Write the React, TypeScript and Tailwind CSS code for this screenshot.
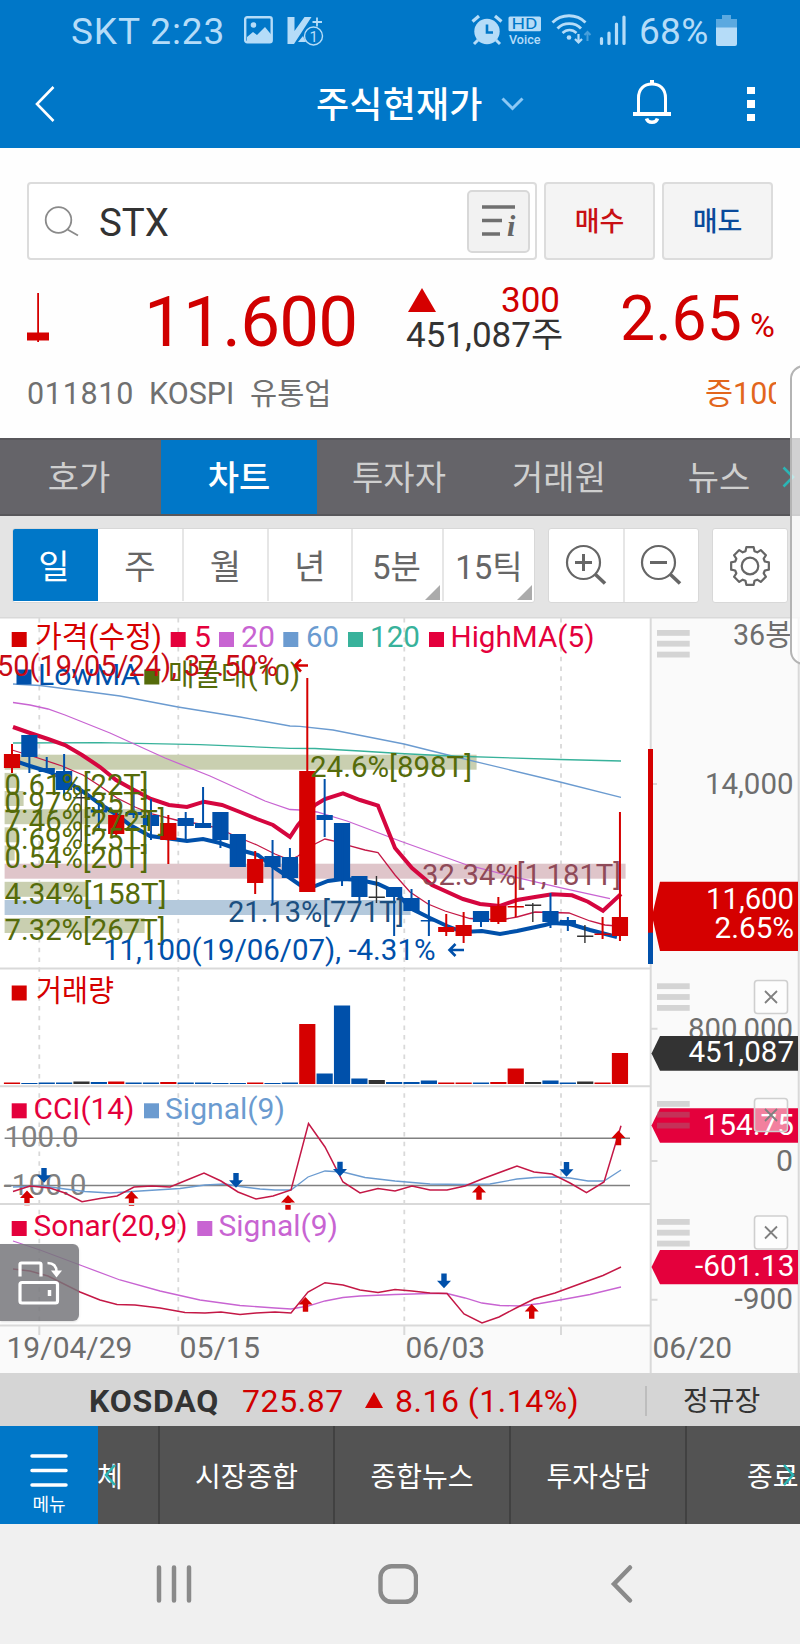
import React from 'react';

const RED = '#d50000';
const BLUE = '#0050aa';
const BLACK = '#333333';
const CRIMSON = '#e4003c';
const PURPLE = '#c864d2';
const SKY = '#6b9bd0';
const TEAL = '#38b29b';
const OLIVE = '#556b0a';
const GRAY = '#6e6e6e';

// [color, bodyTop, bodyBottom, wickTop, wickBottom, volumeHeight]
type Candle = [string, number, number, number, number, number];

const candles: Candle[] = [
    [RED, 754, 768, 744, 773, 1.5],
    [BLUE, 735, 757, 735, 773, 1],
    [BLUE, 768, 772, 757, 773, 1.5],
    [BLUE, 771, 790, 754, 796, 1.5],
    [BLACK, 797, 798.5, 790, 842, 2.5],
    [BLUE, 809.5, 812.5, 802, 831, 2],
    [RED, 815, 834, 810, 837, 2.5],
    [BLUE, 812, 815, 793, 818, 1.5],
    [BLUE, 815, 826, 799, 840, 1.5],
    [RED, 823, 840, 815, 864, 2],
    [BLUE, 818, 826, 812, 840, 1.5],
    [BLUE, 823, 828, 787, 828, 1.5],
    [BLUE, 812, 840, 812, 848, 1],
    [BLUE, 834, 867, 834, 867, 1],
    [RED, 859, 883, 851, 894, 1.5],
    [BLUE, 856, 867, 840, 904, 1],
    [BLUE, 857, 878, 848, 878, 1.5],
    [RED, 771, 892, 678, 892, 60],
    [BLUE, 815, 820, 779, 837, 10.5],
    [BLUE, 823, 881, 823, 886, 78.5],
    [BLUE, 876, 897, 876, 903, 5.5],
    [BLACK, 896.5, 898, 876, 903, 4],
    [BLUE, 887, 897, 887, 936, 2],
    [BLUE, 898, 911, 889, 911, 2],
    [BLUE, 920, 921.5, 900, 936, 3.5],
    [RED, 927, 932, 914, 936, 1.5],
    [RED, 925, 936, 912, 943, 1.5],
    [BLUE, 911, 922, 911, 927, 1.5],
    [RED, 906, 922, 897, 924, 2],
    [RED, 906, 907.5, 865, 917, 15.5],
    [BLACK, 904.5, 906, 903, 922, 2],
    [BLUE, 911, 922, 893, 928, 3.5],
    [BLUE, 920, 924.5, 917, 931, 1.5],
    [BLACK, 935.5, 937, 925, 943, 2.5],
    [RED, 933.5, 935, 917, 939, 1.5],
    [RED, 917, 936, 812, 941, 31],
];

const centerX = (i: number) => 12 + i * 17.37;

const priceLines = [
    { color: SKY, width: 1.3, points: '13,684 40,685.5 75,690 120,696 178,707 240,717 290,726 300,726.3 333,730 404,744 450,755.5 560,782 621,797.3' },
    { color: TEAL, width: 1.3, points: '13,743 100,742.7 200,744.7 290,748.3 315,748.5 360,751 400,753.5 450,756 560,759.5 621,761' },
    { color: PURPLE, width: 1.3, points: '13,702.5 30,705 48,709 65,715 110,733 165,758 210,776 265,801 290,809.5 300,810 317,812 347,821 400,841 467,865 513,876.7 560,887.7 610,898.7' },
    { color: '#c41846', width: 1.3, points: '12,750 35,757 62,766 83,775 100,786 117,798 135,807 152,814 180,821 200,824 218,828 235,836 257,845 275,854 290,860 298,856 315,844 325,839 343,843 350,846 365,850 378,852.7 395,875 410,892 428,904 445,911 470,918.5 500,920 517,917 535,912 552,912.5 569,913 590,921 605,925 617,926' },
    { color: '#0050aa', width: 4, points: '12,760 30,766 50,772 65,780 85,793 100,804 117,815 130,825 150,836 165,838 187,841 203,839 220,843 240,850 258,855 275,868 290,878 300,885 315,886 328,881 343,879 360,880 378,884 395,892 412,909 430,918 447,926 463,932 482,931 500,934 517,931 545,925 552,923 570,924 590,930 617,937' },
    { color: '#d5063f', width: 4, points: '13,727 30,733 48,739 65,745 82,755 100,767 116,780 134,790 151,799 169,805 187,807 204,801.7 222,805 240,812 257,819 273,825 290,837 298,825 315,805 325,799 343,793.3 360,800 378,805.7 395,848 412,868 432,885 463,899 480,904 500,906 517,900 535,897 552,894.3 572,895.3 588,901.7 603,910.7 621,894' },
];

const profile = [
    { y: 754.7, w: 472, fill: '#c9cfb0' },
    { y: 772.9, w: 12, fill: '#c9cfb0' },
    { y: 791, w: 19, fill: '#c9cfb0' },
    { y: 809.2, w: 143, fill: '#c9cfb0' },
    { y: 827.3, w: 13, fill: '#c9cfb0' },
    { y: 845.5, w: 10, fill: '#c9cfb0' },
    { y: 863.7, w: 621, fill: '#dfc5ca' },
    { y: 881.8, w: 83, fill: '#c9cfb0' },
    { y: 900, w: 406, fill: '#b4c9dc' },
    { y: 918, w: 140, fill: '#c9cfb0' },
];

const profileLabels = [
    { x: 310, y: 776.5, w: 162, text: '24.6%[898T]', fill: OLIVE },
    { x: 4.5, y: 794.5, w: 144, text: '0.61%[22T]', fill: OLIVE },
    { x: 4.5, y: 812.5, w: 144, text: '0.97%[35T]', fill: OLIVE },
    { x: 4.5, y: 830.5, w: 161, text: '7.46%[272T]', fill: OLIVE },
    { x: 4.5, y: 849, w: 144, text: '0.69%[25T]', fill: OLIVE },
    { x: 4.5, y: 867.5, w: 144, text: '0.54%[20T]', fill: OLIVE },
    { x: 422, y: 885.2, w: 199, text: '32.34%[1,181T]', fill: '#8f4a58' },
    { x: 4.5, y: 903.7, w: 162, text: '4.34%[158T]', fill: OLIVE },
    { x: 228, y: 921.7, w: 176, text: '21.13%[771T]', fill: '#1b4f80' },
    { x: 4.5, y: 940, w: 161, text: '7.32%[267T]', fill: OLIVE },
];

const legends = [
    { x: 11.7, y: 632, color: RED, tx: 35, w: 127, text: '가격(수정)' },
    { x: 170.7, y: 632, color: CRIMSON, tx: 194, w: 17, text: '5' },
    { x: 219, y: 632, color: PURPLE, tx: 241, w: 34, text: '20' },
    { x: 283.3, y: 632, color: SKY, tx: 306, w: 33, text: '60' },
    { x: 348, y: 632, color: TEAL, tx: 370, w: 50, text: '120' },
    { x: 429, y: 632, color: CRIMSON, tx: 450.5, w: 144, text: 'HighMA(5)' },
    { x: 16.5, y: 669.5, color: BLUE, tx: 38, w: 102, text: 'LowMA' },
    { x: 144.3, y: 669.5, color: OLIVE, tx: 168, w: 132, text: '매물대(10)' },
    { x: 11.7, y: 985.5, color: RED, tx: 36, w: 78, text: '거래량' },
    { x: 11.7, y: 1103.3, color: CRIMSON, tx: 33.5, w: 101, text: 'CCI(14)' },
    { x: 144, y: 1103.3, color: SKY, tx: 165, w: 120, text: 'Signal(9)' },
    { x: 11.7, y: 1221, color: CRIMSON, tx: 33.5, w: 154, text: 'Sonar(20,9)' },
    { x: 197.3, y: 1221, color: PURPLE, tx: 218.5, w: 119.5, text: 'Signal(9)' },
];

const gridX = [39.3, 178.3, 404.3, 561];

interface LabelProps {
    x: number;
    y: number;
    w: number;
    fill: string;
    size?: number;
    children: React.ReactNode;
}

function Label({ x, y, w, fill, size = 29.5, children }: LabelProps) {
    return (
        <text x={x} y={y} fill={fill} fontSize={size} textLength={w} lengthAdjust="spacingAndGlyphs">
            {children}
        </text>
    );
}

function Arrow({ x, y, up }: { x: number; y: number; up?: boolean }) {
    return up ? (
        <path d={`M${x} ${y}l7 7.5h-4.3v7.2h-5.4v-7.2h-4.3z`} fill={RED} />
    ) : (
        <path d={`M${x} ${y + 14.7}l-7 -7.5h4.3v-7.2h5.4v7.2h4.3z`} fill={BLUE} />
    );
}

function Handle({ y }: { y: number }) {
    return (
        <g fill="#8c8c8c" fillOpacity="0.35">
            <rect x="657" y={y} width="32.7" height="5.8" />
            <rect x="657" y={y + 10.8} width="32.7" height="5.8" />
            <rect x="657" y={y + 21.7} width="32.7" height="5.8" />
        </g>
    );
}

function CloseBox({ y }: { y: number }) {
    return (
        <g>
            <rect x="754.5" y={y} width="33" height="33" rx="3" fill="#ffffff" fillOpacity="0.5" stroke="#cfcfcf" strokeWidth="1.6" />
            <path d={`M765 ${y + 10.5}l12 12m0 -12l-12 12`} stroke="#808080" strokeWidth="1.8" fill="none" />
        </g>
    );
}

function Chart() {
    return (
        <svg viewBox="0 617 800 756" className="block h-[756px] w-full bg-white">
            {/* axis backgrounds */}
            <rect x="651" y="617" width="149" height="756" fill="#fafafa" />
            <rect x="0" y="1326" width="800" height="47" fill="#fafafa" />
            <g stroke="#d9d9d9" strokeWidth="2" fill="none">
                {gridX.map((x) => (
                    <path key={x} d={`M${x} 618V1324`} strokeWidth="1.8" strokeDasharray="4.5 5.2" />
                ))}
                <path d="M0 617.5H800" />
                <path d="M0 968.5H650M0 1086.3H650M0 1204H650M0 1325.5H650" />
                <path d="M39.3 1325V1335M178.3 1325V1335M404.3 1325V1335M561 1325V1335" />
                <path d="M650.7 617V1373M798.7 617V1373" />
                <path d="M651 784H657M651 1028.7H657.5M651 1161H657.5M651 1299.7H657.5" />
            </g>

            {profile.map((p) => (
                <rect key={p.y} x="4.6" y={p.y} width={p.w} height="15" fill={p.fill} />
            ))}

            {priceLines.map((l, i) => (
                <polyline key={i} points={l.points} fill="none" stroke={l.color} strokeWidth={l.width} />
            ))}

            {candles.map(([color, top, bottom, wickTop, wickBottom, volume], i) => (
                <g key={i} fill={color}>
                    <rect x={centerX(i) - 8.1} y={top} width="16.2" height={bottom - top} />
                    <rect x={centerX(i) - 1} y={wickTop} width={color === BLACK ? 1.4 : 2} height={wickBottom - wickTop} />
                    <rect x={centerX(i) - 8.1} y={1084 - volume} width="16.2" height={volume} />
                </g>
            ))}

            {profileLabels.map((l) => (
                <Label key={l.text} x={l.x} y={l.y} w={l.w} fill={l.fill}>{l.text}</Label>
            ))}

            {/* low marker */}
            <Label x={103} y={960.2} w={332.5} fill={BLUE}>11,100(19/06/07), -4.31%</Label>
            <path d="M464 950H450M455.5 944L449.5 950L455.5 956" stroke={BLUE} strokeWidth="2.6" fill="none" />

            {/* CCI */}
            <path d="M4.6 1138.2H630M4.6 1185.5H630" stroke="#808080" strokeWidth="1.4" />
            <Label x={4.5} y={1147.3} w={74} fill="#808080">100.0</Label>
            <Label x={3.5} y={1194.5} w={83} fill="#808080">-100.0</Label>
            <polyline
                points="13,1187 43,1186 65,1189 85,1191.5 110,1193 140,1191 180,1188.5 205,1185 225,1184 240,1186.5 260,1189 275,1190 291,1190 308,1177 325,1171 343,1172 365,1177.5 395,1181 430,1184 465,1184.5 490,1184 517,1179 535,1177.5 555,1177 570,1178 588,1181 604,1181 621,1170"
                fill="none" stroke={SKY} strokeWidth="1.3"
            />
            <polyline
                points="13,1191.5 30,1186 50,1188 65,1193 82,1201.7 100,1198.5 117,1196 134,1187 152,1186 170,1187 187,1180 204,1173 221,1181 238,1192 256,1199 273,1196 291,1190 308.5,1123.5 325,1147 343,1182 360,1193 378,1188.5 395,1191 412,1186 430,1190 447,1190 465,1186 482,1179 517,1166 534,1172 552,1174 570,1183 586.5,1192.7 604,1182 621,1125.7"
                fill="none" stroke="#c41846" strokeWidth="1.5"
            />
            <Arrow x={44} y={1168} />
            <Arrow x={236} y={1173} />
            <Arrow x={340} y={1161.7} />
            <Arrow x={566.5} y={1162} />
            <Arrow x={27} y={1190.5} up />
            <Arrow x={131.5} y={1191} up />
            <Arrow x={288} y={1195} up />
            <Arrow x={479} y={1185} up />
            <Arrow x={618.5} y={1130.5} up />
            <path d="M0 1204H300" stroke="#d9d9d9" strokeWidth="2" />

            {/* Sonar */}
            <polyline
                points="13,1241 40,1250 80,1265 120,1280 160,1291 200,1300 240,1305.5 275,1308 291,1309 308,1306 325,1301 343,1297.5 360,1296 395,1294.5 430,1293.5 447,1293.5 465,1298 482,1303 500,1305.5 520,1306 540,1303.5 560,1300 590,1294.5 621,1287"
                fill="none" stroke={PURPLE} strokeWidth="1.3"
            />
            <polyline
                points="13,1269 30,1271 48,1276 80,1292 100,1300 117,1304.5 135,1305 160,1308 185,1312.5 205,1313 221,1312 240,1314.5 256,1313 275,1312 291,1313 308,1292 325,1282.7 343,1285 360,1290 378,1292.5 395,1289.5 412,1291 430,1293 447,1293.5 464,1314 482,1323 499,1317 517,1307.5 534,1299 555,1293 585,1282 603,1275.5 621,1267"
                fill="none" stroke="#c41846" strokeWidth="1.5"
            />
            <Arrow x={305.5} y={1297} up />
            <Arrow x={444} y={1273.5} />
            <Arrow x={531.7} y={1304} up />

            {legends.map((l, i) => (
                <g key={i}>
                    <rect x={l.x} y={l.y} width="15" height="15" fill={l.color} />
                    <Label x={l.tx} y={l.y + 15.3} w={l.w} fill={l.color}>{l.text}</Label>
                </g>
            ))}

            {/* high marker */}
            <Label x={-3} y={675.7} w={281} fill="#c80a14">50(19/05/24), 37.50%</Label>
            <path d="M308 665.5H295M301 659.5L295 665.5L301 671.5" stroke={RED} strokeWidth="2.6" fill="none" />

            {/* right axis */}
            <rect x="648" y="749" width="5" height="184" fill={RED} />
            <rect x="648" y="932.7" width="5" height="31.3" fill={BLUE} />
            <Handle y={630} />
            <Label x={733} y={645.3} w={58.5} fill={GRAY}>36봉</Label>
            <Label x={705} y={794.3} w={88.5} fill={GRAY}>14,000</Label>
            <path d="M652 916L660 881.7H798V951H660z" fill={RED} />
            <Label x={706} y={909.3} w={88} fill="#ffffff">11,600</Label>
            <Label x={714.5} y={938.3} w={79.5} fill="#ffffff">2.65%</Label>

            <Label x={688} y={1039} w={105} fill={GRAY}>800,000</Label>
            <path d="M651.5 1053.5L660 1036H798V1070.7H660z" fill={BLACK} />
            <Label x={688.5} y={1062.2} w={105.5} fill="#ffffff">451,087</Label>
            <path d="M651.5 1125.5L660 1108.3H798V1142.7H660z" fill={CRIMSON} />
            <Label x={702.5} y={1135} w={91.5} fill="#ffffff">154.75</Label>
            <Label x={776} y={1171} w={17} fill={GRAY}>0</Label>
            <path d="M651.5 1267L660 1250H798V1284.3H660z" fill={CRIMSON} />
            <Label x={695} y={1276.3} w={99.5} fill="#ffffff">-601.13</Label>
            <Label x={734.5} y={1309.3} w={58.5} fill={GRAY}>-900</Label>
            <Handle y={983.3} />
            <Handle y={1101} />
            <Handle y={1219} />
            <CloseBox y={980.5} />
            <CloseBox y={1098.5} />
            <CloseBox y={1216} />

            <Label x={6.5} y={1357.5} w={126} fill={GRAY}>19/04/29</Label>
            <Label x={179.5} y={1357.5} w={80.5} fill={GRAY}>05/15</Label>
            <Label x={405.5} y={1357.5} w={79.5} fill={GRAY}>06/03</Label>
            <Label x={652.5} y={1357.5} w={79.5} fill={GRAY}>06/20</Label>
        </svg>
    );
}

function StatusBar() {
    return (
        <div className="flex h-[60px] items-center pl-[71px] text-[37px] leading-none text-[#b5dcf8]">
            <span className="w-[154px] pt-[2px] tracking-[0.9px] whitespace-nowrap">SKT 2:23</span>
            <svg viewBox="0 0 80 32" className="ml-[19px] h-8 w-20 shrink-0" fill="none">
                <rect x="1.2" y="3.2" width="26.5" height="25" rx="2" stroke="currentColor" strokeWidth="2.4" />
                <circle cx="9.5" cy="11" r="2.8" fill="currentColor" />
                <path d="M3 23l6-5 4 3 8-8 6.5 8v7H3z" fill="currentColor" />
                <path d="M43.5 3h7v14l10-14h7L50 30h-6.5z" fill="currentColor" />
                <path d="M54 28l5-6 3 6z" fill="currentColor" />
                <path d="M73 3.500v9M68.500 8h9.500" stroke="currentColor" strokeWidth="1.8" />
                <circle cx="69.5" cy="22" r="9" fill="#0077c8" stroke="currentColor" strokeWidth="1.4" />
                <text x="65.5" y="27.5" fontSize="15" fill="currentColor">1</text>
            </svg>
            <svg viewBox="0 0 160 32" className="ml-[147px] h-8 w-40 shrink-0" fill="none" stroke="currentColor">
                <circle cx="16" cy="17.5" r="12.7" fill="currentColor" stroke="none" />
                <path d="M16 10.5v8h6" stroke="#0077c8" strokeWidth="2.6" />
                <path d="M1.5 7.500L8 2M30.500 7.500L24 2" strokeWidth="3.2" />
                <path d="M7 26l-4 4M25 26l4 4" strokeWidth="3" />
                <rect x="37.5" y="2.5" width="32.5" height="14.8" rx="1.5" fill="currentColor" stroke="none" />
                <text x="40.5" y="14.8" fontSize="14.5" textLength="26" lengthAdjust="spacingAndGlyphs" fill="#0077c8" stroke="none">HD</text>
                <text x="38" y="29.5" fontSize="12.5" fontWeight="500" textLength="31.5" lengthAdjust="spacingAndGlyphs" fill="currentColor" stroke="none">Voice</text>
                <path d="M81.5 8.500c9-9 24-9 33 0" strokeWidth="2.8" />
                <path d="M86.5 14.500c6-6.500 17.500-6.500 23.500 0" strokeWidth="2.8" />
                <path d="M91.5 19c4-4 10-4 14 0" strokeWidth="2.6" />
                <circle cx="98" cy="23.5" r="2.3" fill="currentColor" stroke="none" />
                <path d="M107.5 20v8M104 25l3.500 3.500L111 25" strokeWidth="2.2" />
                <path d="M116.500 27v-9M113.500 21l3-3 3 3" strokeWidth="2" opacity="0.4" />
                <path d="M130.500 24.500v5M138 19v10.500M145.500 10v19.500M153 3v26.500" strokeWidth="3.2" strokeLinecap="round" />
            </svg>
            <span className="ml-[8px] w-[72px] pt-[2px] tracking-[0.3px]">68%</span>
            <svg viewBox="0 0 21 31" className="ml-[5px] h-[31px] w-[21px] shrink-0" fill="currentColor">
                <path d="M6 0h9v4h6v9H0V4h6z" opacity="0.5" />
                <path d="M0 12.500h21V29a2 2 0 0 1-2 2H2a2 2 0 0 1-2-2z" />
            </svg>
        </div>
    );
}

function Header() {
    return (
        <div className="h-[148px] bg-[#0077c8] text-white">
            <StatusBar />
            <div className="flex h-[88px] items-center">
                <svg viewBox="0 0 20 36" className="ml-[35px] h-9 w-5 shrink-0" fill="none" stroke="currentColor" strokeWidth="2.6">
                    <path d="M18.500 1L2 18l16.500 17" />
                </svg>
                <h1 className="ml-[261px] w-[170px] pt-[4px] text-[36px] leading-[44px] font-medium tracking-[0.2px] whitespace-nowrap">주식현재가</h1>
                <svg viewBox="0 0 23 14" className="ml-[15px] h-3.5 w-[23px] shrink-0" fill="none" stroke="#8cc8f5" strokeWidth="3">
                    <path d="M1.500 1.500l10 10 10-10" />
                </svg>
                <svg viewBox="0 0 40 46" className="mt-[-4px] ml-[108px] h-[46px] w-10 shrink-0" fill="none" stroke="currentColor" strokeWidth="3">
                    <path d="M20 1v4" strokeWidth="4" />
                    <path d="M6.500 34V19C6.500 10 12 5 20 5s13.500 5 13.500 14v15" />
                    <path d="M1 35h38" strokeWidth="4" />
                    <path d="M14.500 39.500c1.500 5 9.500 5 11 0" strokeWidth="3.5" />
                </svg>
                <div className="ml-[75px] flex flex-col gap-[6px]">
                    <span className="size-[7.5px] bg-white" />
                    <span className="size-[7.5px] bg-white" />
                    <span className="size-[7.5px] bg-white" />
                </div>
            </div>
        </div>
    );
}

function SearchRow() {
    return (
        <div className="flex h-[78px] items-stretch gap-[7px] pl-[27px]">
            <div className="flex w-[510px] items-center rounded-[4px] border-2 border-[#dcdcdc] bg-white">
                <svg viewBox="0 0 36 32" className="ml-[15px] h-8 w-9 shrink-0" fill="none" stroke="#8a8a8a" strokeWidth="1.8">
                    <circle cx="14.5" cy="15" r="12.8" />
                    <path d="M23.500 24.500l10.500 6" />
                </svg>
                <span className="ml-[19px] w-[368px] pt-[4px] text-[38.5px] leading-none text-[#333333]">STX</span>
                <div className="flex h-[63px] w-[63px] shrink-0 items-center justify-center rounded-[5px] border-2 border-[#d8d8d8] bg-[#f2f2f2]">
                    <svg viewBox="0 0 36 34" className="h-[34px] w-9" fill="none" stroke="#707070" strokeWidth="3.5">
                        <path d="M1 3h33M1 16.500h20M1 30h18" />
                        <text x="26" y="32" fontSize="30" fontWeight="bold" fontStyle="italic" fontFamily="Liberation Serif" fill="#666666" stroke="none">i</text>
                    </svg>
                </div>
            </div>
            <button className="w-[111px] rounded-[4px] border-2 border-[#dcdcdc] bg-[#f4f4f4] pt-[3px] text-[27px] font-medium text-[#c80f14]">매수</button>
            <button className="w-[111px] rounded-[4px] border-2 border-[#dcdcdc] bg-[#f4f4f4] pt-[3px] text-[27px] font-medium text-[#0a4a9b]">매도</button>
        </div>
    );
}

function PriceInfo() {
    return (
        <div>
            <div className="mt-[22px] flex h-[78px]">
                <svg viewBox="0 0 22 50" className="mt-[11px] ml-[27px] h-[50px] w-[22px] shrink-0" fill={RED}>
                    <rect x="10.2" y="0" width="1.8" height="49" />
                    <rect x="0" y="39.5" width="22" height="8" />
                </svg>
                <div className="ml-[95px] w-[222px] text-[71px] leading-[79px] tracking-[-0.8px] text-[#d00000]">11.600</div>
                <div className="ml-[39px] w-[165px]">
                    <div className="flex h-[36px] items-center justify-between pr-[10px] text-[35px] leading-[36px] text-[#d00000]">
                        <svg viewBox="0 0 28 24" className="ml-[3px] h-6 w-7" fill={RED}>
                            <path d="M14 0l14 24H0z" />
                        </svg>
                        <span className="pt-[2px]">300</span>
                    </div>
                    <div className="mt-[1px] ml-[1px] h-[36px] text-[35px] leading-[34px] whitespace-nowrap text-[#333333]">451,087주</div>
                </div>
                <div className="ml-[50px] w-[123px] text-[62.5px] leading-[73px] text-[#d00000]">2.65</div>
                <div className="mt-[23px] ml-[7px] text-[34px] leading-[40px] text-[#d00000]">%</div>
            </div>
            <div className="mt-[14px] flex h-[40px] items-center text-[30.5px] leading-[40px] whitespace-nowrap text-[#707070]">
                <span className="ml-[27px] w-[122px] tracking-[0.7px]">011810</span>
                <span className="w-[101px]">KOSPI</span>
                <span className="w-[455px] text-[29.5px]">유통업</span>
                <span className="w-[71px] overflow-hidden text-[#e2661c]">증100</span>
            </div>
        </div>
    );
}

function Tabs() {
    const tabs = ['호가', '차트', '투자자', '거래원', '뉴스'];
    return (
        <div className="flex h-[78px] border-y-2 border-[#58575b] bg-[#656469] text-[34px] leading-[76px] text-[#cfcfcf]">
            {tabs.map((tab) => (
                <div
                    key={tab}
                    className={
                        tab === '차트'
                            ? 'mr-[2px] ml-[3px] h-[74px] w-[156px] bg-[#0077c8] text-center font-medium text-white'
                            : tab === '호가'
                              ? 'w-[158px] text-center'
                              : 'w-[160px] text-center'
                    }
                >
                    {tab}
                </div>
            ))}
            <svg viewBox="0 0 14 22" className="mt-[26px] ml-[-17px] h-[22px] w-3.5 shrink-0" fill="none" stroke="#2bb5b5" strokeWidth="2.6">
                <path d="M1.500 1.500l9.500 9.500-9.500 9.500" />
            </svg>
        </div>
    );
}

const gearPath = () => {
    const parts: string[] = [];
    for (let i = 0; i < 8; i++) {
        const steps = [[-17, 15.5], [-11, 19.2], [11, 19.2], [17, 15.5]];
        steps.forEach(([deg, r]) => {
            const a = ((i * 45 + deg - 90) * Math.PI) / 180;
            parts.push(`${(21 + r * Math.cos(a)).toFixed(2)} ${(21 + r * Math.sin(a)).toFixed(2)}`);
        });
    }
    return `M${parts.join('L')}Z`;
};

function ZoomIcon({ plus }: { plus?: boolean }) {
    return (
        <svg viewBox="0 0 42 42" className="size-[42px]" fill="none" stroke="#666666" strokeWidth="2.2">
            <circle cx="18.5" cy="18.5" r="16.5" />
            <path d={plus ? 'M10 18.5h17M18.5 10v17' : 'M10 18.5h17'} strokeWidth="3" />
            <path d="M30.500 30.500l9.500 9" strokeWidth="3.6" />
        </svg>
    );
}

function Toolbar() {
    const cell = 'relative flex items-center justify-center border-r-2 border-[#e6e6e6]';
    return (
        <div className="flex h-[101px] bg-[#e4e4e4] pt-[12px] pl-[12px] text-[34px] leading-none text-[#666666]">
            <div className="flex h-[75px] w-[523px] overflow-hidden rounded-[3px] border border-[#d8d8d8] bg-white pb-[1px]">
                <div className="flex w-[85px] items-center justify-center bg-[#0077c8] pt-[4px] pr-[3px] text-white">일</div>
                <div className={`${cell} w-[86px] pt-[4px]`}>주</div>
                <div className={`${cell} w-[85px] pt-[4px]`}>월</div>
                <div className={`${cell} w-[84px] pt-[4px]`}>년</div>
                <div className={`${cell} w-[91px] pt-[4px] pr-[2px] text-[33px]`}>
                    5분
                    <svg viewBox="0 0 15 15" className="absolute right-[2px] bottom-[1px] size-[15px]" fill="#ababab"><path d="M15 0v15H0z" /></svg>
                </div>
                <div className="relative flex w-[90px] items-center justify-center pt-[4px] text-[33px]">
                    15틱
                    <svg viewBox="0 0 15 15" className="absolute right-[2px] bottom-[1px] size-[15px]" fill="#ababab"><path d="M15 0v15H0z" /></svg>
                </div>
            </div>
            <div className="ml-[13px] flex h-[75px] w-[151px] rounded-[3px] border border-[#d8d8d8] bg-white">
                <div className={`${cell} w-[76px] pb-[2px]`}><ZoomIcon plus /></div>
                <div className="flex w-[74px] items-center justify-center pb-[2px]"><ZoomIcon /></div>
            </div>
            <div className="ml-[13px] flex h-[75px] w-[76px] items-center justify-center rounded-[3px] border border-[#d8d8d8] bg-white">
                <svg viewBox="0 0 42 42" className="size-[42px]" fill="none" stroke="#666666" strokeWidth="2.2" strokeLinejoin="round">
                    <path d={gearPath()} />
                    <circle cx="21" cy="21" r="8.3" />
                </svg>
            </div>
        </div>
    );
}

function IndexBar() {
    return (
        <div className="flex h-[53px] items-center bg-[#d5d5d5] pt-[2px] text-[32px] leading-none whitespace-nowrap text-[#d00000]">
            <span className="ml-[89px] w-[153px] font-bold tracking-[0.8px] text-[#333333]">KOSDAQ</span>
            <span className="w-[123px] tracking-[0.6px]">725.87</span>
            <svg viewBox="0 0 18 16" className="mb-[2px] h-4 w-[18px]" fill={RED}><path d="M9 0l9 16H0z" /></svg>
            <span className="ml-[12px] w-[250px] tracking-[0.5px]">8.16 (1.14%)</span>
            <span className="h-[30px] w-[2px] bg-[#bdbdbd]" />
            <span className="ml-[36px] pt-[3px] text-[28px] text-[#333333]">정규장</span>
        </div>
    );
}

function BottomMenu() {
    return (
        <div className="flex h-[98px] overflow-hidden bg-[#535353] text-[28px] leading-[103px] whitespace-nowrap text-white">
            <div className="flex w-[98px] shrink-0 flex-col items-center bg-[#0077c8] pt-[28px]">
                <svg viewBox="0 0 38 34" className="h-[34px] w-[38px]" stroke="white" strokeWidth="3.5" strokeLinecap="round">
                    <path d="M2 2h34M2 16.500h34M2 31h34" />
                </svg>
                <span className="mt-[5px] text-[18px] leading-[24px]">메뉴</span>
            </div>
            <div className="relative flex w-[62px] shrink-0 justify-start overflow-hidden border-r-2 border-[#414141]">
                <span className="ml-[-1px]">체</span>
                <svg viewBox="0 0 12 22" className="absolute top-[38px] left-[6px] h-[22px] w-3" fill="none" stroke="#2bb5b5" strokeWidth="2.5"><path d="M11 1L2 11l9 10" /></svg>
            </div>
            <div className="w-[175px] shrink-0 border-r-2 border-[#414141] text-center">시장종합</div>
            <div className="w-[176px] shrink-0 border-r-2 border-[#414141] text-center">종합뉴스</div>
            <div className="w-[176px] shrink-0 border-r-2 border-[#414141] text-center">투자상담</div>
            <div className="relative w-[113px] shrink-0 pl-[60px]">
                종료
                <svg viewBox="0 0 12 22" className="absolute top-[38px] right-[5px] h-[22px] w-3" fill="none" stroke="#2bb5b5" strokeWidth="2.5"><path d="M1 1l9 10-9 10" /></svg>
            </div>
        </div>
    );
}

function SystemNav() {
    return (
        <div className="flex h-[120px] bg-[#f0f0f0] pt-[40px]">
            <svg viewBox="0 0 36 40" className="ml-[156px] h-10 w-9" stroke="#8a8a8a" strokeWidth="4.5" strokeLinecap="round">
                <path d="M3 3.500v33M18 3.500v33M33 3.500v33" />
            </svg>
            <svg viewBox="0 0 40 40" className="ml-[186px] size-10" fill="none" stroke="#8a8a8a" strokeWidth="4.4">
                <rect x="2.5" y="2.3" width="35.5" height="35.5" rx="11" />
            </svg>
            <svg viewBox="0 0 24 40" className="ml-[192px] h-10 w-6" fill="none" stroke="#8a8a8a" strokeWidth="4.5" strokeLinecap="round">
                <path d="M20 3.500L4 20l16 16.500" />
            </svg>
        </div>
    );
}

export default function App() {
    return (
        <div className="relative h-[1644px] w-[800px] overflow-hidden bg-white font-['Roboto','Noto_Sans_CJK_KR',sans-serif]">
            <Header />
            <div className="h-[290px] bg-[#fefefe] pt-[34px]">
                <SearchRow />
                <PriceInfo />
            </div>
            <Tabs />
            <Toolbar />
            <div className="relative">
                <Chart />
                {/* rotate screen button */}
                <div className="absolute bottom-[52px] left-0 flex h-[77px] w-[79px] items-center justify-center rounded-r-[6px] bg-[#77777b]/85 shadow">
                    <svg viewBox="0 0 44 44" className="h-11 w-11" fill="none" stroke="white" strokeWidth="3.2">
                        <path d="M2 15.500V3.500a1.500 1.500 0 0 1 1.500-1.500h18a1.500 1.500 0 0 1 1.500 1.500v12" />
                        <rect x="2" y="21.5" width="37.5" height="20.5" rx="2" />
                        <path d="M31.500 29v6" strokeWidth="3.5" />
                        <path d="M29.500 2c6 0 9 3 9 9" strokeWidth="2.6" />
                        <path d="M33 9.500h11l-5.500 7z" fill="white" stroke="none" />
                    </svg>
                </div>
            </div>
            <IndexBar />
            <BottomMenu />
            <SystemNav />
            {/* edge panel handle */}
            <div className="absolute top-[365px] right-[-10px] h-[300px] w-[20px] rounded-l-[14px] border-2 border-[#b4b4b4] bg-white/70" />
        </div>
    );
}
